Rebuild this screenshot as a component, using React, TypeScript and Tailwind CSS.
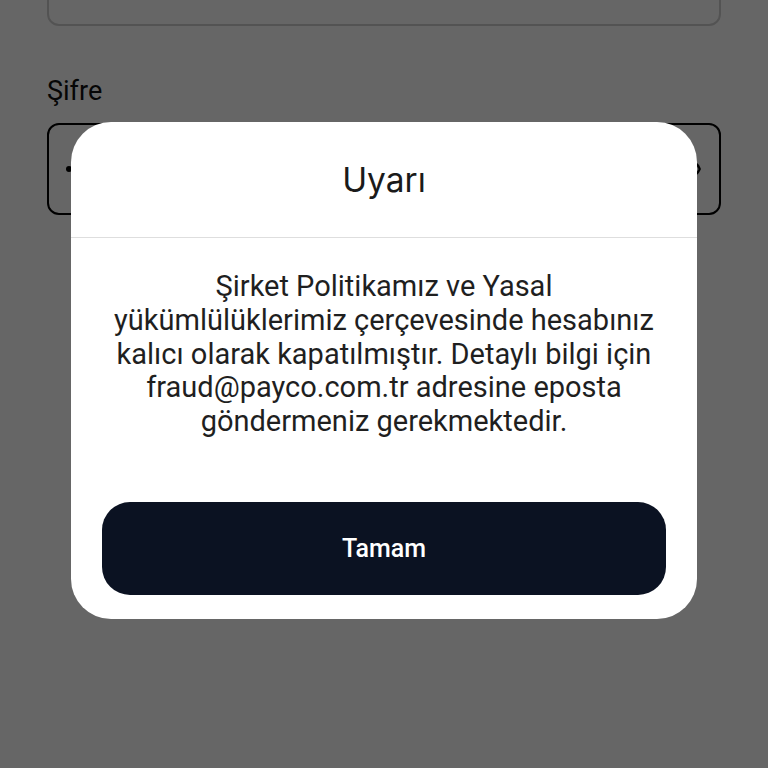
import { Eye } from 'lucide-react';

export default function App() {
  return (
    <div className="relative h-[768px] w-[768px] overflow-hidden bg-white font-['Roboto',sans-serif]">
      {/* login form behind the dialog */}
      <div className="px-[47px]">
        <div className="-mt-[66px] h-[92px] rounded-[12px] border-2 border-[#d0d0d0]" />
        <div className="mt-[48px] text-[27px] leading-[34px] text-[#111]">Şifre</div>
        <div className="mt-[15px] flex h-[92px] items-center justify-between rounded-[12px] border-2 border-black px-[17px]">
          <span className="h-[6px] w-[6px] rounded-full bg-black" />
          <Eye className="h-[28px] w-[28px] text-black" strokeWidth={2} />
        </div>
      </div>

      {/* overlay */}
      <div className="absolute inset-0 flex justify-center bg-black/60 pt-[122px]">
        <div className="flex h-[497px] w-[626px] flex-col rounded-[40px] bg-white">
          <div className="flex h-[116px] items-center justify-center border-b border-[#dedede]">
            <h2 className="pt-[2px] font-['Inter',sans-serif] text-[33.5px] font-normal text-[#1a1a1a]">Uyarı</h2>
          </div>
          <p className="px-[34px] pt-[32px] text-center text-[29px] leading-[33.75px] text-[#1f1f1f]">
            Şirket Politikamız ve Yasal yükümlülüklerimiz çerçevesinde hesabınız kalıcı olarak kapatılmıştır. Detaylı bilgi için fraud@payco.com.tr adresine eposta göndermeniz gerekmektedir.
          </p>
          <div className="mt-auto px-[31px] pb-[24px]">
            <button
              type="button"
              className="flex h-[93px] w-full items-center justify-center rounded-[28px] bg-[#0b1222] text-[25px] font-medium text-white"
            >
              Tamam
            </button>
          </div>
        </div>
      </div>
    </div>
  );
}
